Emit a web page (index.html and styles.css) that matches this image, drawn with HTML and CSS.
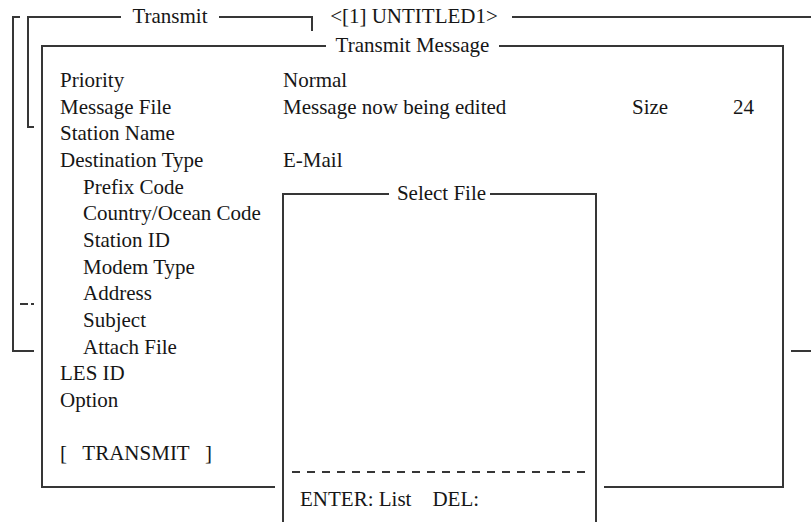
FILE: index.html
```
<!DOCTYPE html>
<html lang="en">
<head>
    <meta charset="UTF-8">
    <meta name="viewport" content="width=device-width, initial-scale=1.0">
    <title>Transmit Message</title>
    <link rel="stylesheet" href="styles.css">
</head>
<body>
    <div class="desk">
        <div class="win outer">
            <div class="title"><span>&lt;[1] UNTITLED1&gt;</span></div>
            <div class="dash-rule"></div>
        </div>

        <div class="win transmit">
            <div class="title"><span>Transmit</span></div>
        </div>

        <div class="win message">
            <div class="title"><span>Transmit Message</span></div>
            <div class="fields">
                <div class="lbl">Priority</div>
                <div class="val">Normal</div>

                <div class="lbl">Message File</div>
                <div class="val one">Message now being edited</div>
                <div class="size">Size</div>
                <div class="num">24</div>

                <div class="lbl">Station Name</div>
                <div class="val"></div>

                <div class="lbl">Destination Type</div>
                <div class="val">E-Mail</div>

                <div class="lbl sub">Prefix Code</div>
                <div class="val"></div>
                <div class="lbl sub">Country/Ocean Code</div>
                <div class="val"></div>
                <div class="lbl sub">Station ID</div>
                <div class="val"></div>
                <div class="lbl sub">Modem Type</div>
                <div class="val"></div>
                <div class="lbl sub">Address</div>
                <div class="val"></div>
                <div class="lbl sub">Subject</div>
                <div class="val"></div>
                <div class="lbl sub">Attach File</div>
                <div class="val"></div>

                <div class="lbl">LES ID</div>
                <div class="val"></div>
                <div class="lbl">Option</div>
                <div class="val"></div>

                <div class="full"></div>
                <div class="full btn">[   TRANSMIT   ]</div>
            </div>
        </div>

        <div class="win select">
            <div class="title"><span>Select File</span></div>
            <div class="list"></div>
            <div class="dash-line"></div>
            <div class="keys">ENTER: List    DEL:</div>
        </div>
    </div>
</body>
</html>
```

FILE: styles.css
```
html, body {
    margin: 0;
    padding: 0;
    background: #fff;
}
body {
    width: 811px;
    height: 522px;
    overflow: hidden;
    font-family: "Liberation Serif", Tinos, "Times New Roman", "DejaVu Serif", serif;
    font-size: 21px;
    color: #161616;
}
.desk {
    position: relative;
    width: 811px;
    height: 522px;
}

/* windows stacked on the screen */
.win {
    position: absolute;
    box-sizing: border-box;
    border: 2px solid #363636;
    background: #fff;
}
.win .title {
    position: absolute;
    top: -14px;
    left: 0;
    right: 0;
    text-align: center;
    line-height: 24px;
    white-space: pre;
}
.win .title span {
    background: #fff;
    padding: 0 10px;
}
.transmit, .message, .select {
    box-shadow: 0 0 0 7px #fff, 0 -7px 0 7px #fff;
}
.message {
    box-shadow: 0 0 0 7px #fff, 0 -7px 0 7px #fff;
}

.outer {
    left: 12px;
    top: 16px;
    width: 804px;
    height: 336px;
}
.outer .title span {
    padding: 0 14px;
}
.dash-rule {
    margin: 285px 0 0 6px;
    width: 600px;
    height: 2px;
    background: repeating-linear-gradient(to right, #363636 0 8px, transparent 8px 11px);
}

.transmit {
    left: 27px;
    top: 16px;
    width: 286px;
    height: 112px;
}
.transmit .title span {
    padding: 0 11px;
}

.message {
    left: 41px;
    top: 45px;
    width: 743px;
    height: 443px;
}
.fields {
    display: grid;
    grid-template-columns: 223px 349px 101px auto;
    padding: 20px 0 0 17px;
    line-height: 26.67px;
    white-space: pre;
}
.fields .val {
    grid-column: span 3;
}
.fields .val.one {
    grid-column: span 1;
}
.fields .sub {
    padding-left: 23px;
}
.fields .full {
    grid-column: 1 / -1;
    min-height: 26.67px;
}

.select {
    left: 282px;
    top: 193px;
    width: 315px;
    height: 340px;
    display: flex;
    flex-direction: column;
}
.select .title span {
    padding: 0 4px 0 8px;
}
.list {
    height: 276px;
}
.dash-line {
    margin: 0 8px;
    height: 2px;
    background: repeating-linear-gradient(to right, #363636 0 8px, transparent 8px 15px);
}
.keys {
    margin-top: 13px;
    padding-left: 16px;
    line-height: 26.67px;
    white-space: pre;
}
```
